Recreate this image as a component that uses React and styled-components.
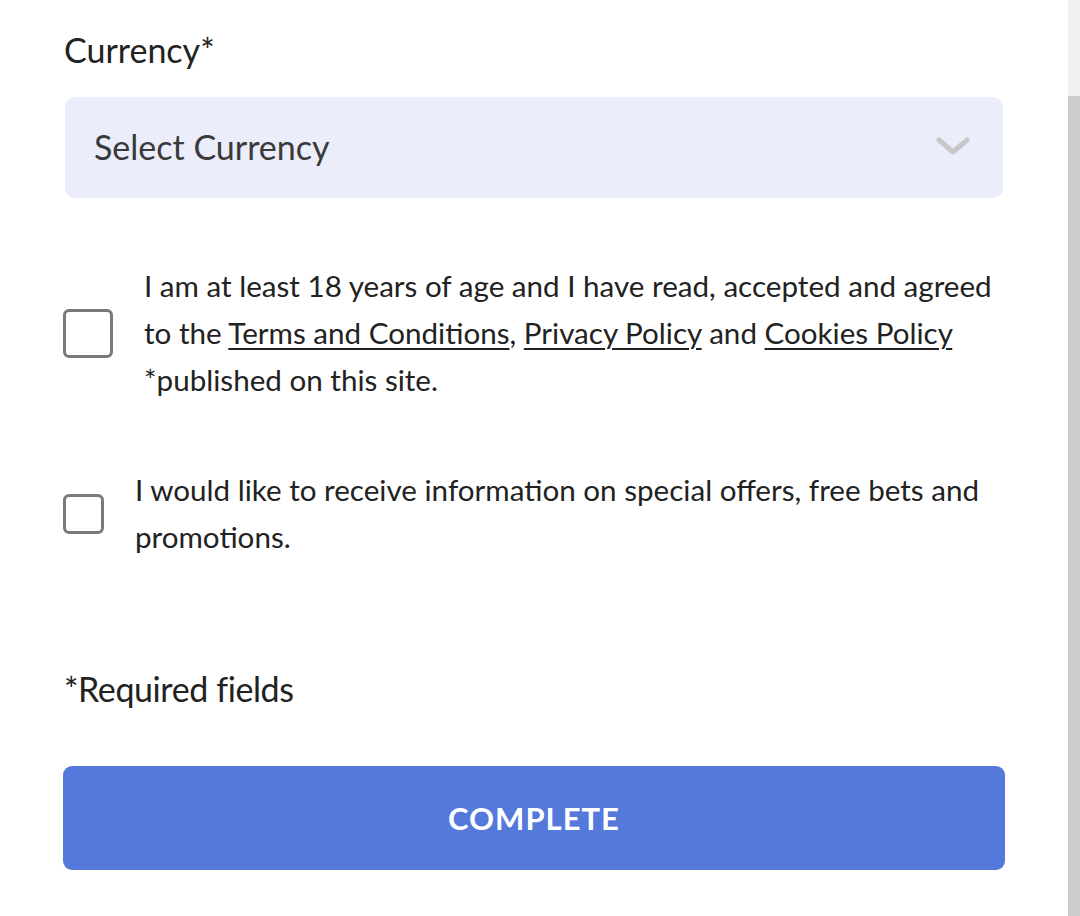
import React from 'react';
import styled, { createGlobalStyle } from 'styled-components';

const COLORS = {
  TEXT: '#222222',
  SELECT_TEXT: '#3a3a3a',
  SELECT_BG: '#ebedfa',
  CHEVRON: '#c8c8c8',
  CHECKBOX_BORDER: '#7a7a7a',
  PRIMARY: '#5479db',
  WHITE: '#ffffff',
  TRACK: '#f1f1f1',
  THUMB: '#cdcdcd',
};

const GlobalStyle = createGlobalStyle`
  html, body {
    margin: 0;
    padding: 0;
    background: ${COLORS.WHITE};
    font-family: Lato, 'Liberation Sans', sans-serif;
    color: ${COLORS.TEXT};
  }
`;

const ChevronIcon = () => (
  <svg width="34" height="22" viewBox="0 0 34 22" fill="none">
    <polyline
      points="3,4 17,16 31,4"
      stroke={COLORS.CHEVRON}
      strokeWidth="5"
      strokeLinecap="round"
      strokeLinejoin="round"
    />
  </svg>
);

const CheckRow = ({ size, textOffset, children }) => (
  <CheckboxRow>
    <Checkbox size={size} />
    <CheckboxText offset={textOffset}>{children}</CheckboxText>
  </CheckboxRow>
);

const App = () => (
  <>
    <GlobalStyle />
    <Page>
      <Form>
        <FieldLabel>Currency*</FieldLabel>
        <SelectBox>
          <SelectValue>Select Currency</SelectValue>
          <ChevronIcon />
        </SelectBox>

        <Agreements>
          <CheckRow size={50} textOffset={31}>
            I am at least 18 years of age and I have read, accepted and agreed to the{' '}
            <Link>Terms and Conditions</Link>, <Link>Privacy Policy</Link> and{' '}
            <Link>Cookies Policy</Link> *published on this site.
          </CheckRow>
          <CheckRow size={41} textOffset={31}>
            I would like to receive information on special offers, free bets and promotions.
          </CheckRow>
        </Agreements>

        <RequiredNote>*Required fields</RequiredNote>
        <SubmitButton type="button">COMPLETE</SubmitButton>
      </Form>
      <Scrollbar>
        <ScrollTrack />
        <ScrollThumb />
      </Scrollbar>
    </Page>
  </>
);

export default App;

const Page = styled.div`
  display: flex;
  height: 100vh;
  overflow: hidden;
`;

const Form = styled.div`
  display: flex;
  flex-direction: column;
  width: 942px;
  padding: 30px 0 0 63px;
`;

const FieldLabel = styled.div`
  font-size: 34px;
  line-height: 40px;
  padding-left: 1px;
`;

const SelectBox = styled.div`
  display: flex;
  align-items: center;
  justify-content: space-between;
  height: 99px;
  margin: 27px 2px 0;
  padding: 0 33px 2px 29px;
  border-radius: 10px;
  background: ${COLORS.SELECT_BG};
`;

const SelectValue = styled.span`
  font-size: 34px;
  line-height: 40px;
  color: ${COLORS.SELECT_TEXT};
`;

const Agreements = styled.div`
  display: flex;
  flex-direction: column;
  gap: 63px;
  margin-top: 64px;
`;

const CheckboxRow = styled.div`
  display: flex;
  align-items: center;
`;

const Checkbox = styled.span`
  flex: none;
  box-sizing: border-box;
  width: ${({ size }) => size}px;
  height: ${({ size }) => size - 1}px;
  border: 3px solid ${COLORS.CHECKBOX_BORDER};
  border-radius: 6px;
  margin-top: 2px;
`;

const CheckboxText = styled.p`
  flex: 1;
  margin: 0 0 0 ${({ offset }) => offset}px;
  font-size: 29.6px;
  line-height: 47px;
`;

const Link = styled.a`
  color: inherit;
  text-decoration: underline;
  text-decoration-thickness: 2px;
  text-underline-offset: 4px;
  cursor: pointer;
`;

const RequiredNote = styled.div`
  margin-top: 109px;
  font-size: 34px;
  line-height: 40px;
  letter-spacing: -0.4px;
  padding-left: 1px;
`;

const SubmitButton = styled.button`
  height: 104px;
  margin-top: 57px;
  border: none;
  border-radius: 9px;
  background: ${COLORS.PRIMARY};
  color: ${COLORS.WHITE};
  font-family: inherit;
  font-size: 31px;
  font-weight: 700;
  letter-spacing: 1px;
  cursor: pointer;
`;

const Scrollbar = styled.div`
  display: flex;
  flex-direction: column;
  width: 12px;
  margin-left: auto;
`;

const ScrollTrack = styled.div`
  height: 96px;
  background: ${COLORS.TRACK};
`;

const ScrollThumb = styled.div`
  flex: 1;
  background: ${COLORS.THUMB};
`;
